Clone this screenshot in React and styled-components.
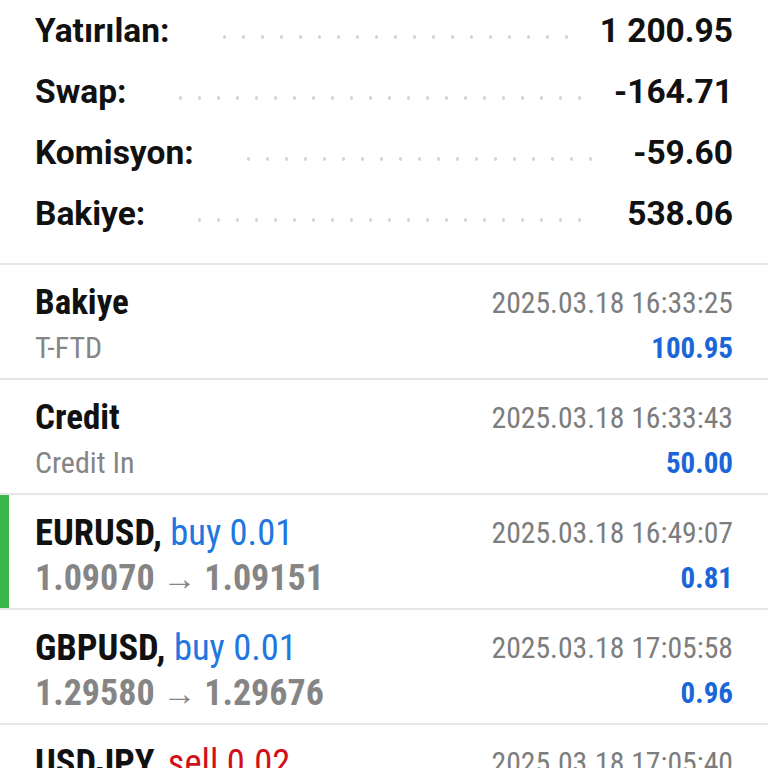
import React from "react";
import styled, { createGlobalStyle } from "styled-components";

const GlobalStyle = createGlobalStyle`
  html, body {
    margin: 0;
    padding: 0;
    background: #ffffff;
  }
  body {
    font-family: Roboto, "Liberation Sans", sans-serif;
    color: #111111;
  }
`;

const Page = styled.div`
  width: 768px;
  height: 768px;
  overflow: hidden;
  background: #ffffff;
`;

const Summary = styled.div`
  padding: 0 35px 19px;
  border-bottom: 2px solid #e6e6e6;
`;

const SummaryRow = styled.div`
  display: flex;
  align-items: center;
  height: 61px;
  font-size: 33.5px;
  font-weight: 700;
`;

const Leader = styled.div`
  flex: 1;
  height: 4px;
  margin: 12px 30px 0 45px;
  background-image: radial-gradient(circle, #d6d6d6 1.7px, transparent 1.9px);
  background-size: 19px 4px;
  background-repeat: repeat-x;
`;

const List = styled.div`
  font-family: "Roboto Condensed", Roboto, sans-serif;
`;

const Row = styled.div`
  position: relative;
  display: grid;
  grid-template-columns: 1fr auto;
  grid-auto-rows: 45px;
  align-items: center;
  padding: 15px 35px 8px;
  border-bottom: 2px solid #e6e6e6;
`;

const Marker = styled.div`
  position: absolute;
  left: 0;
  top: 0;
  bottom: 0;
  width: 9px;
  background: #3cb54a;
`;

const Title = styled.div`
  font-size: ${p => (p.trade ? "36.5px" : "35px")};
  font-weight: 700;
  color: #111111;
  white-space: nowrap;
`;

const Side = styled.span`
  font-weight: 400;
  color: ${p => (p.sell ? "#d0101b" : "#2176e0")};
`;

const Sub = styled.div`
  font-size: ${p => (p.price ? "36px" : "30px")};
  font-weight: ${p => (p.price ? 700 : 400)};
  color: #858585;
  white-space: nowrap;
`;

const Arrow = styled.span`
  font-weight: 400;
  font-size: 34px;
`;

const Time = styled.div`
  font-size: 29.7px;
  color: #7d7d7d;
  text-align: right;
`;

const Amount = styled.div`
  font-size: 29px;
  font-weight: 700;
  color: #1a66d9;
  text-align: right;
`;

const summary = [
  ["Yatırılan:", "1 200.95"],
  ["Swap:", "-164.71"],
  ["Komisyon:", "-59.60"],
  ["Bakiye:", "538.06"]
];

const deals = [
  { title: "Bakiye", sub: "T-FTD", time: "2025.03.18 16:33:25", amount: "100.95" },
  { title: "Credit", sub: "Credit In", time: "2025.03.18 16:33:43", amount: "50.00" },
  {
    title: "EURUSD", side: "buy 0.01", from: "1.09070", to: "1.09151",
    time: "2025.03.18 16:49:07", amount: "0.81", marked: true
  },
  {
    title: "GBPUSD", side: "buy 0.01", from: "1.29580", to: "1.29676",
    time: "2025.03.18 17:05:58", amount: "0.96"
  },
  {
    title: "USDJPY", side: "sell 0.02", sell: true, from: "149.280", to: "149.190",
    time: "2025.03.18 17:05:40", amount: "1.21"
  }
];

const App = () => (
  <Page>
    <GlobalStyle/>
    <Summary>
      {summary.map(([label, value]) => (
        <SummaryRow key={label}>
          <span>{label}</span>
          <Leader/>
          <span>{value}</span>
        </SummaryRow>
      ))}
    </Summary>
    <List>
      {deals.map(d => (
        <Row key={d.time}>
          {d.marked && <Marker/>}
          <Title trade={!!d.side}>
            {d.title}
            {d.side && <>, <Side sell={d.sell}>{d.side}</Side></>}
          </Title>
          <Time>{d.time}</Time>
          {d.from ?
            <Sub price>{d.from}<Arrow> → </Arrow>{d.to}</Sub>
            :
            <Sub>{d.sub}</Sub>
          }
          <Amount>{d.amount}</Amount>
        </Row>
      ))}
    </List>
  </Page>
);

export default App;
